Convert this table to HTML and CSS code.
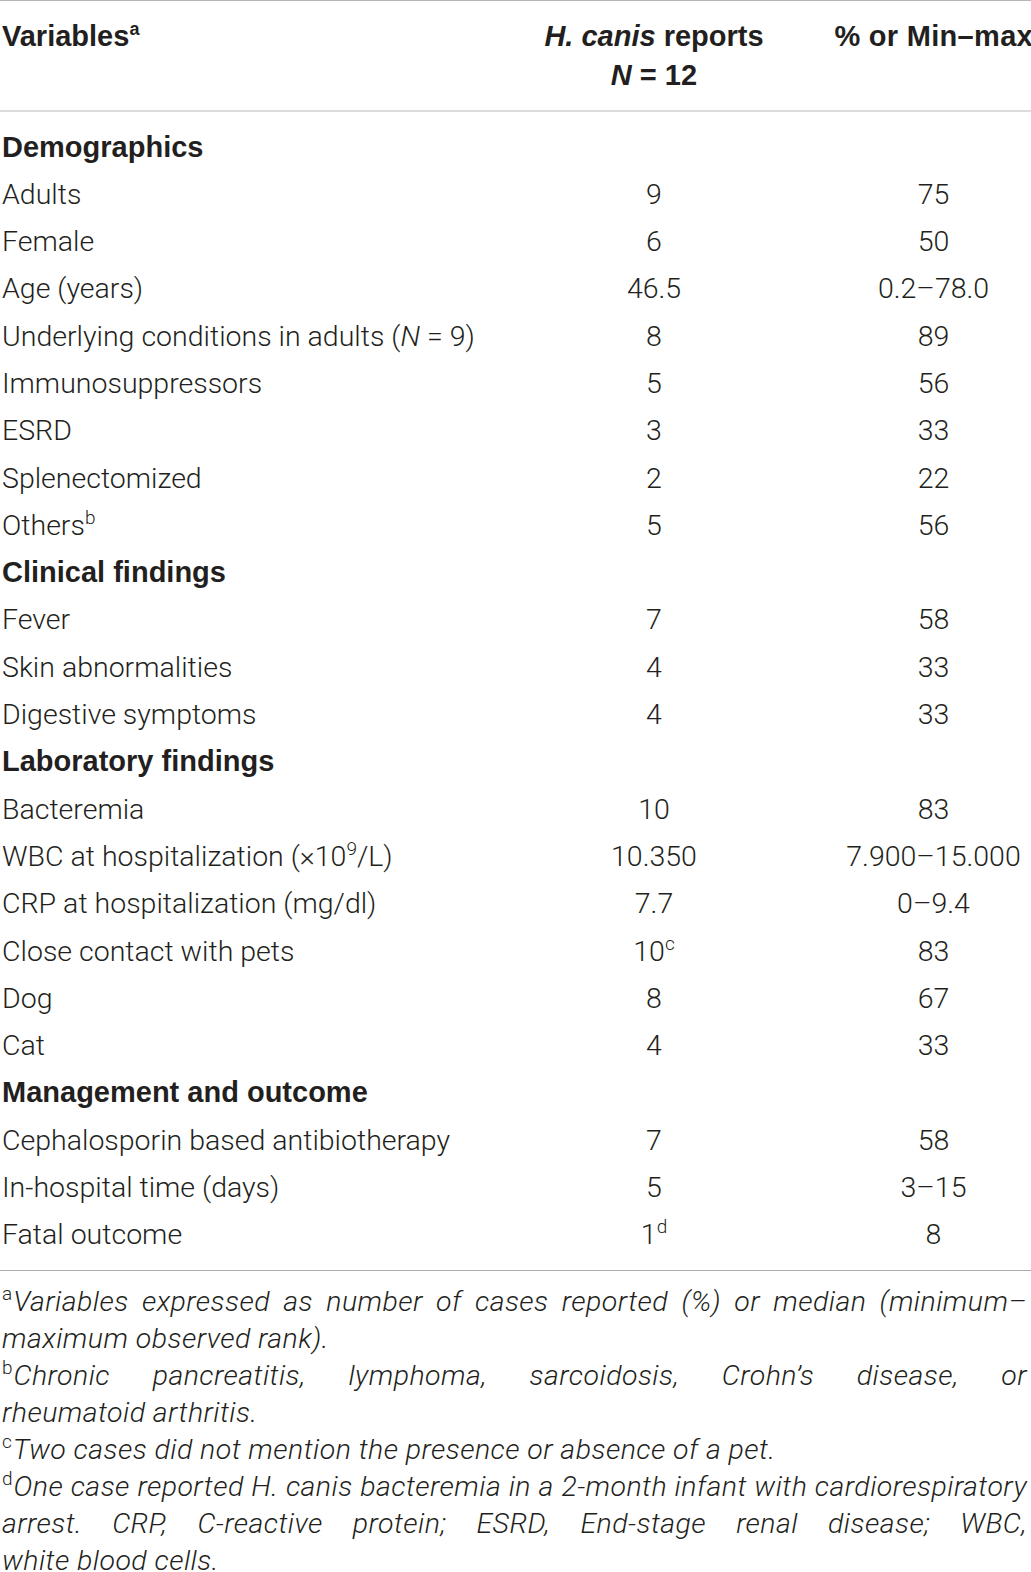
FILE: index.html
```html
<!DOCTYPE html>
<html lang="en">
<head>
<meta charset="utf-8">
<title>H. canis reports</title>
<link rel="stylesheet" href="styles.css">
</head>
<body>
<div class="doc">
  <table class="tbl">
    <thead>
      <tr>
        <th class="c-var">Variables<sup class="hsup">a</sup></th>
        <th class="c-n"><i>H. canis</i> reports<br><i>N</i> = 12</th>
        <th class="c-p">% or Min–max</th>
      </tr>
    </thead>
    <tbody>
      <tr class="sec first"><td colspan="3">Demographics</td></tr>
      <tr><td>Adults</td><td>9</td><td>75</td></tr>
      <tr><td>Female</td><td>6</td><td>50</td></tr>
      <tr><td>Age (years)</td><td>46.5</td><td>0.2–78.0</td></tr>
      <tr><td>Underlying conditions in adults (<i>N</i> = 9)</td><td>8</td><td>89</td></tr>
      <tr><td>Immunosuppressors</td><td>5</td><td>56</td></tr>
      <tr><td>ESRD</td><td>3</td><td>33</td></tr>
      <tr><td>Splenectomized</td><td>2</td><td>22</td></tr>
      <tr><td>Others<sup class="s">b</sup></td><td>5</td><td>56</td></tr>
      <tr class="sec"><td colspan="3">Clinical findings</td></tr>
      <tr><td>Fever</td><td>7</td><td>58</td></tr>
      <tr><td>Skin abnormalities</td><td>4</td><td>33</td></tr>
      <tr><td>Digestive symptoms</td><td>4</td><td>33</td></tr>
      <tr class="sec"><td colspan="3">Laboratory findings</td></tr>
      <tr><td>Bacteremia</td><td>10</td><td>83</td></tr>
      <tr><td>WBC at hospitalization (×10<sup class="s">9</sup>/L)</td><td>10.350</td><td>7.900–15.000</td></tr>
      <tr><td>CRP at hospitalization (mg/dl)</td><td>7.7</td><td>0–9.4</td></tr>
      <tr><td>Close contact with pets</td><td>10<sup class="s">c</sup></td><td>83</td></tr>
      <tr><td>Dog</td><td>8</td><td>67</td></tr>
      <tr><td>Cat</td><td>4</td><td>33</td></tr>
      <tr class="sec"><td colspan="3">Management and outcome</td></tr>
      <tr><td>Cephalosporin based antibiotherapy</td><td>7</td><td>58</td></tr>
      <tr><td>In-hospital time (days)</td><td>5</td><td>3–15</td></tr>
      <tr class="last"><td>Fatal outcome</td><td>1<sup class="s">d</sup></td><td>8</td></tr>
    </tbody>
  </table>
  <div class="notes">
    <p class="note">
      <span class="ln j"><sup class="fs">a</sup>Variables expressed as number of cases reported (%) or median (minimum–</span>
      <span class="ln">maximum observed rank).</span>
    </p>
    <p class="note">
      <span class="ln j"><sup class="fs">b</sup>Chronic pancreatitis, lymphoma, sarcoidosis, Crohn’s disease, or</span>
      <span class="ln">rheumatoid arthritis.</span>
    </p>
    <p class="note">
      <span class="ln"><sup class="fs">c</sup>Two cases did not mention the presence or absence of a pet.</span>
    </p>
    <p class="note">
      <span class="ln j"><sup class="fs">d</sup>One case reported H. canis bacteremia in a 2-month infant with cardiorespiratory</span>
      <span class="ln j">arrest. CRP, C-reactive protein; ESRD, End-stage renal disease; WBC,</span>
      <span class="ln">white blood cells.</span>
    </p>
  </div>
</div>
</body>
</html>
```
FILE: styles.css
```css
html, body {
  margin: 0;
  padding: 0;
  background: #ffffff;
}
body {
  color: #231f20;
  font-family: Roboto, "Liberation Sans", Arial, sans-serif;
  font-weight: 300;
}
.doc {
  width: 1031px;
}
.tbl {
  width: 100%;
  border-collapse: collapse;
  table-layout: fixed;
  border-top: 1px solid #b5b5b5;
  border-bottom: 1px solid #ababab;
}
.tbl th, .tbl td {
  padding: 0;
  vertical-align: middle;
}
.c-var { width: 516px; }
.c-n { width: 272px; }
.c-p { width: 243px; }
.tbl thead th {
  font-family: "Liberation Sans", Arial, sans-serif;
  font-weight: 700;
  font-size: 29px;
  line-height: 39px;
  vertical-align: top;
  padding-top: 16px;
  padding-bottom: 15px;
  border-bottom: 2px solid #dcdcdc;
  white-space: nowrap;
}
.tbl thead th.c-var { text-align: left; padding-left: 2px; }
.tbl thead th.c-n { text-align: center; }
.tbl thead th.c-p { text-align: right; padding-right: 6px; letter-spacing: 0.3px; }
.hsup {
  font-size: 18px;
  vertical-align: 11px;
  line-height: 0;
}
.tbl tbody td {
  font-size: 28.5px;
  height: 47.3px;
  line-height: 47.3px;
  text-align: center;
  white-space: nowrap;
}
.tbl tbody td:first-child {
  text-align: left;
  padding-left: 2px;
}
.tbl tbody td:nth-child(3) {
  padding-left: 38px;
}
.tbl tbody tr.sec td {
  font-family: "Liberation Sans", Arial, sans-serif;
  font-weight: 700;
  font-size: 29px;
}
.tbl tbody tr.first td {
  padding-top: 11.5px;
}
.tbl tbody tr.last td {
  padding-bottom: 11.5px;
}
.s {
  font-size: 19px;
  vertical-align: 11px;
  line-height: 0;
}
.notes {
  padding: 11.5px 4px 0 2px;
}
.note {
  margin: 0;
  font-style: italic;
  font-size: 28.5px;
  line-height: 37.1px;
  letter-spacing: 0.45px;
}
.ln {
  display: block;
  white-space: nowrap;
  text-align: left;
}
.ln.j {
  text-align: justify;
  text-align-last: justify;
}
.fs {
  font-style: normal;
  font-size: 19px;
  vertical-align: 11px;
  line-height: 0;
  letter-spacing: 0;
  margin-right: 1px;
}
```
